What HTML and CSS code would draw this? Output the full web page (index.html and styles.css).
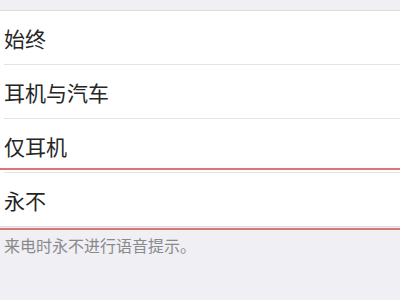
FILE: index.html
```html
<!DOCTYPE html>
<html lang="zh-CN">
<head>
    <meta charset="UTF-8">
    <meta name="viewport" content="width=device-width, initial-scale=1.0"/>
    <title>来电语音提示</title>
    <link rel="stylesheet" href="styles.css">
</head>
<body>
<div class="page">
    <div class="top-gap"></div>
    <div class="list">
        <div class="row"><span>始终</span></div>
        <div class="row"><span>耳机与汽车</span></div>
        <div class="row"><span>仅耳机</span></div>
        <div class="row selected">
            <span>永不</span>
            <div class="highlight"></div>
        </div>
    </div>
    <div class="footer">来电时永不进行语音提示。</div>
</div>
</body>
</html>
```

FILE: styles.css
```css
body {
    margin: 0;
    background-color: #efeff4;
    font-family: "Noto Sans CJK SC", "Noto Sans", sans-serif;
}
.page {
    width: 400px;
    height: 300px;
    overflow: hidden;
}
.top-gap {
    height: 10px;
}
.list {
    background-color: #fff;
    border-top: 1px solid #dcdce0;
    border-bottom: 1px solid #dcdce0;
}
.row {
    position: relative;
    display: flex;
    align-items: center;
    height: 53px;
    padding-left: 4px;
    font-size: 21px;
    color: #262626;
    border-bottom: 1px solid transparent;
}
.row::after {
    content: "";
    position: absolute;
    left: 4px;
    right: 0;
    bottom: -1px;
    border-bottom: 1px solid #e4e4e8;
}
.row:last-child {
    border-bottom: none;
}
.row:last-child::after {
    display: none;
}
.selected .highlight {
    position: absolute;
    left: 0;
    right: 0;
    top: -5px;
    bottom: -4px;
    border-top: 2px solid #dc7676;
    border-bottom: 2px solid #dc7676;
}
.footer {
    padding: 6px 4px;
    font-size: 16px;
    color: #8a8a8e;
}
```
